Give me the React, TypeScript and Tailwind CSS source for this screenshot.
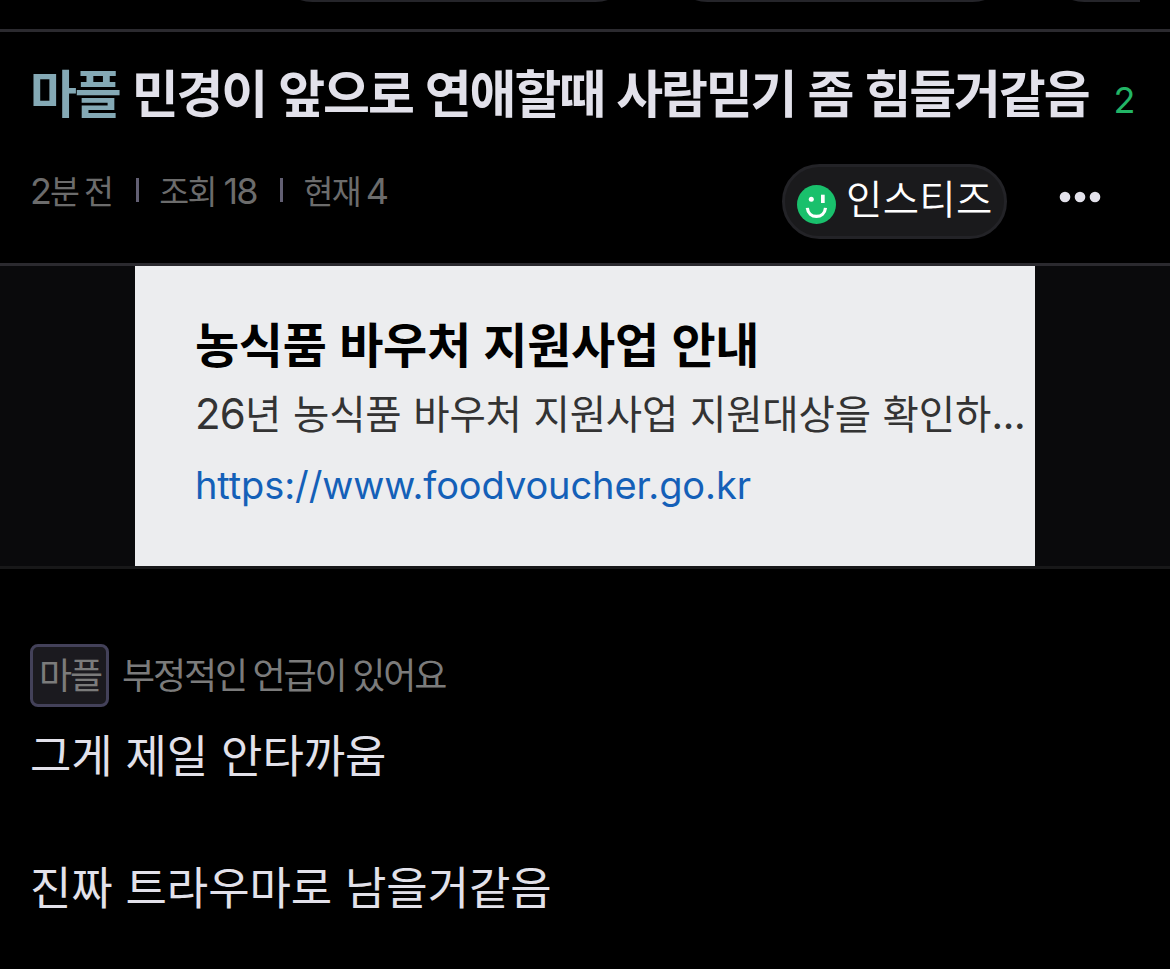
import type { ReactNode } from 'react';

const TABS = [
  { id: 'first', width: 'w-[358px]' },
  { id: 'second', width: 'w-[340px]' },
  { id: 'third', width: 'w-[360px]' },
];

function Num({ children }: { children: ReactNode }) {
  return <span className="font-[Inter,sans-serif] text-[36px] tracking-[-2px]">{children}</span>;
}

function Divider() {
  return <span className="-mr-0.5 ml-0.5 h-6 w-[3px] shrink-0 bg-[#625f73]" />;
}

function SmileIcon() {
  return (
    <svg width="39" height="39" viewBox="0 0 39 39" fill="none" className="mt-[6px] shrink-0">
      <circle cx="19.5" cy="19.5" r="19.5" fill="#19c06c" />
      <circle cx="14.3" cy="14.2" r="2.5" fill="#fff" />
      <rect x="24" y="9.7" width="3.7" height="8.3" fill="#fff" />
      <path d="M10.3 22.8c0.6 5.6 4.6 8.6 9.1 8.6s8.5-3 9.1-8.6" stroke="#fff" strokeWidth="3.2" />
    </svg>
  );
}

function MoreIcon() {
  return (
    <svg width="42" height="12" viewBox="0 0 42 12" fill="#e2e1ea">
      <circle cx="6" cy="6" r="5.3" />
      <circle cx="21" cy="6" r="5.3" />
      <circle cx="36" cy="6" r="5.3" />
    </svg>
  );
}

export default function App() {
  return (
    <div className="h-[969px] w-[1170px] overflow-hidden bg-black font-['Noto_Sans_CJK_KR',sans-serif] whitespace-nowrap text-[#e2e1ea]">
      {/* Tab strip, scrolled almost out of view */}
      <div className="border-b-[3px] border-[#2b2a2f]">
        <div className="mr-[30px] flex h-[29px] items-end gap-[37px] overflow-hidden pb-[27px] pl-[275px]">
          {TABS.map(tab => (
            <div key={tab.id} className={`h-[75px] shrink-0 rounded-full border-[3px] border-[#25252a] ${tab.width}`} />
          ))}
        </div>
      </div>

      {/* Post header */}
      <header className="h-[234px] border-b-[3px] border-[#2b2a2f] pl-[30px]">
        <div className="flex h-[124px] items-center">
          <h1 className="-mt-[7px] text-[51px] leading-[124px] font-bold tracking-[-2.1px] [word-spacing:2.6px]">
            <span className="text-[#84a9b5]">마플</span> 민경이 앞으로 연애할때 사람믿기 좀 힘들거같음
          </h1>
          <span className="mt-[12px] ml-[25px] font-[Inter,sans-serif] text-[36px] leading-none text-[#22b566]">2</span>
        </div>
        <div className="flex h-[90px] items-center pr-[69px]">
          <div className="-mt-[22px] flex items-center gap-[22px] text-[32.5px] leading-[48px] tracking-[-1.6px] text-[#6c6c6c]">
            <span><Num>2</Num>분 전</span>
            <Divider />
            <span className="[word-spacing:2px]">조회 <Num>18</Num></span>
            <Divider />
            <span>현재 <Num>4</Num></span>
          </div>
          <div className="ml-auto flex h-[75px] w-[225px] items-center gap-[10px] rounded-full border-[3px] border-[#232327] bg-[#1a1a1c] pl-[12px]">
            <SmileIcon />
            <span className="-mt-[8px] text-[39.5px] leading-[60px] font-[350] tracking-[0.3px] text-white">인스티즈</span>
          </div>
          <div className="-mt-2 ml-[52px]">
            <MoreIcon />
          </div>
        </div>
      </header>

      {/* Banner */}
      <div className="flex h-[303px] justify-center border-b-[3px] border-[#181819] bg-[#0a0a0c]">
        <div className="h-[300px] w-[900px] bg-[#ecedef] pt-[39px] pl-[60px]">
          <div className="text-[48px] leading-[74px] font-bold tracking-[-0.3px] text-black [word-spacing:2px]">농식품 바우처 지원사업 안내</div>
          <div className="text-[39.5px] leading-[66px] tracking-[-0.15px] text-[#333] [word-spacing:3px]">
            <span className="font-[Inter,sans-serif] text-[42px] tracking-[-0.8px]">26</span>년 농식품 바우처 지원사업 지원대상을 확인하<span className="font-[Inter,sans-serif] text-[42px] tracking-[-0.8px]">...</span>
          </div>
          <div className="font-[Inter,sans-serif] text-[38px] leading-[76px] tracking-[-0.1px] text-[#1460b8]">https://www.foodvoucher.go.kr</div>
        </div>
      </div>

      {/* Post body */}
      <main className="px-[30px] pt-[75px]">
        <div className="flex items-center gap-[13px] text-[36px] leading-[52px] tracking-[-2.15px] text-[#7b7b7b]">
          <span className="h-[63px] w-[79px] rounded-lg border-[3px] border-[#434159] bg-[#1b1a1f] pl-[6px]">마플</span>
          <span className="-mt-[6px] [word-spacing:0.8px]">부정적인 언급이 있어요</span>
        </div>
        <div className="mt-[14px] text-[45px] leading-[66px] tracking-[-0.08px] [word-spacing:2.9px]">
          <p>그게 제일 안타까움</p>
          <p className="mt-[66px]">진짜 트라우마로 남을거같음</p>
        </div>
      </main>
    </div>
  );
}
